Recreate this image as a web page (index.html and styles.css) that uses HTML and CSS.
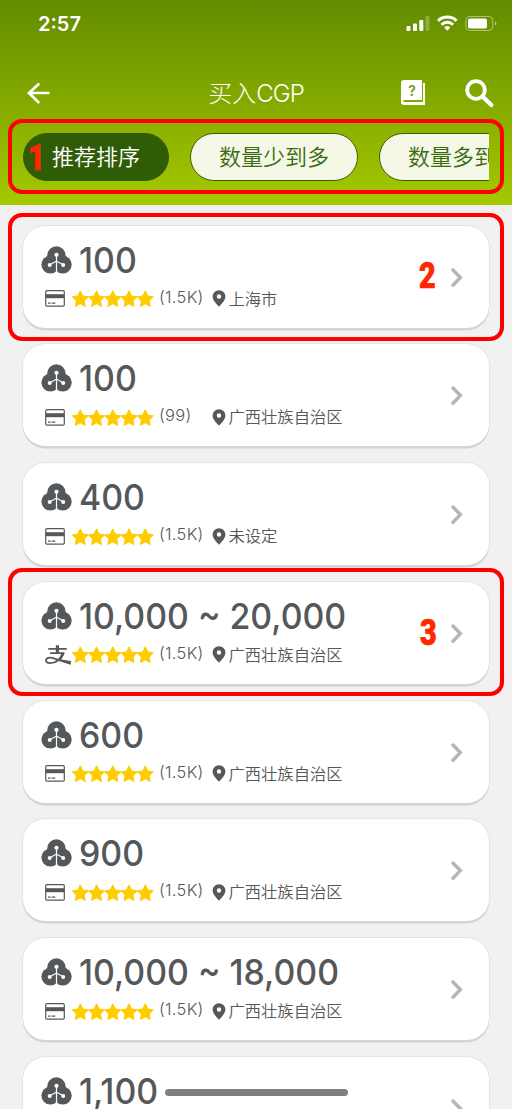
FILE: index.html
```html
<!DOCTYPE html>
<html lang="zh-CN">
<head>
<meta charset="utf-8">
<title>买入CGP</title>
<link rel="stylesheet" href="styles.css">
</head>
<body>
<svg class="defs" aria-hidden="true">
  <symbol id="coin" viewBox="0 0 31 28">
    <g fill="#55585b"><circle cx="15.4" cy="9.4" r="9.200"/><circle cx="9.400" cy="18.600" r="9"/><circle cx="21.700" cy="18.600" r="9"/><path d="M7.500 9.800h16l2 8-6 7h-8l-6-7z"/></g>
    <path d="M15.500 9v19M8.500 19l7-3.900 7 3.900" fill="none" stroke="#fff" stroke-width="1.200"/>
    <circle cx="15.500" cy="8.800" r="2.100" fill="#fff"/><circle cx="8.700" cy="18.900" r="2" fill="#fff"/><circle cx="22.200" cy="18.900" r="2" fill="#fff"/>
  </symbol>
  <symbol id="card" viewBox="0 0 20 17">
    <rect x=".7" y=".7" width="18.600" height="15.400" rx="1.200" fill="none" stroke="#55585b" stroke-width="1.200"/>
    <path d="M1 4.200h18v4H1z" fill="#55585b"/><path d="M3 13.200h2.600M6.700 13.200h3.600" stroke="#55585b" stroke-width="1.300"/>
  </symbol>
  <symbol id="alipay" viewBox="0 0 26 20">
    <path d="M3.300 3.800h18.400M5 8.100h13.200C16 14.200 10.600 18.200 5.200 18.200c-3 0-4.400-1.400-4.200-3 .3-2.200 3.200-3.100 6.200-2.400 5 1.200 10 4.200 18 5" fill="none" stroke="#55585b" stroke-width="1.800"/>
    <path d="M10.800.2h3.200v7.500h-3.200zM16.400 8h3.300c-.8 2.400-2 4.500-3.600 6.300l-2-1c1.100-1.700 1.800-3.400 2.300-5.300zM13.500 13.600c4 1.400 8 2 12.300 2.300v3.900c-4-.9-8.800-3-12.300-5.200z" fill="#55585b"/>
  </symbol>
  <symbol id="stars" viewBox="0 0 82 17">
    <g fill="#fc0" stroke="#fc0" stroke-width="1" stroke-linejoin="round">
      <path id="star" d="M8.300.8l2.500 5.200 5.500.8-4 4.100.9 5.600-4.900-2.700-4.900 2.700.9-5.600-4-4.100 5.500-.8z"/>
      <use href="#star" x="16.250"/><use href="#star" x="32.500"/><use href="#star" x="48.750"/><use href="#star" x="65"/>
    </g>
  </symbol>
  <symbol id="pin" viewBox="0 0 14 17">
    <path fill="#55585b" fill-rule="evenodd" d="M7 .2a6.400 6.400 0 0 0-6.400 6.400C.6 10.800 5 14.600 7 16.800c2-2.200 6.400-6 6.400-10.200A6.400 6.400 0 0 0 7 .2zm0 4.100a2.200 2.200 0 1 1 0 4.400 2.200 2.200 0 0 1 0-4.400z"/>
  </symbol>
  <symbol id="chevron" viewBox="0 0 12 20">
    <path d="M2 2l7.300 7.600L2 17.200" fill="none" stroke="#b6b6b6" stroke-width="3.500" stroke-linecap="round" stroke-linejoin="miter"/>
  </symbol>
</svg>
<div class="screen">
  <header class="top">
    <div class="status">
      <span class="time">2:57</span>
      <svg width="92" height="18" viewBox="0 0 92 18" fill="#fff">
        <rect x="1.500" y="12" width="4" height="5" rx="1"/><rect x="8" y="9.500" width="4" height="7.500" rx="1"/><rect x="14.300" y="6" width="4" height="11" rx="1"/><rect x="20.500" y="2" width="4" height="15" rx="1" opacity=".25"/>
        <g fill="none" stroke="#fff" stroke-width="3"><path d="M33.100 6.800a13.200 13.200 0 0 1 18.400 0"/><path d="M36.500 10.700a8.200 8.200 0 0 1 11.600 0"/></g><path d="M39.300 13.400a4.300 4.300 0 0 1 6 0l-3 3.400z"/>
        <rect x="60.800" y="2.500" width="27" height="14" rx="4" fill="none" stroke="#fff" opacity=".45"/><rect x="63" y="4.500" width="19" height="10" rx="2"/><path d="M89.800 7.500q1.600.5 1.600 2t-1.600 2z" opacity=".5"/>
      </svg>
    </div>
    <div class="nav">
      <svg class="back" width="24" height="24" viewBox="0 0 24 24"><path d="M12.200 2.500L2 12l10.200 10M2.300 12H22.500" fill="none" stroke="#fff" stroke-width="2.700"/></svg>
      <h1>买入<span>CGP</span></h1>
      <div class="tools">
        <div class="book"><svg width="25" height="26" viewBox="0 0 25 26" fill="#fff"><path d="M3 0h18v20H2.500v2H22V3h2v22H3q-3 0-3-3V3q0-3 3-3z"/></svg><span>?</span></div>
        <svg width="29" height="29" viewBox="0 0 29 29" fill="none" stroke="#fff"><circle cx="11" cy="11" r="8.800" stroke-width="3.800"/><path d="M17.500 17.500l8.800 8.500" stroke-width="4.200" stroke-linecap="round"/></svg>
      </div>
    </div>
    <div class="chips"><span class="chip active">推荐排序</span><span class="chip">数量少到多</span><span class="chip">数量多到少</span></div>
  </header>
  <main class="list">
    <article class="offer"><div class="info"><div class="amount"><svg><use href="#coin"/></svg><b>100</b></div><div class="meta"><svg class="pay"><use href="#card"/></svg><svg class="stars"><use href="#stars"/></svg><span class="count">(1.5K)</span><svg class="pin"><use href="#pin"/></svg><span class="place">上海市</span></div></div><svg class="go"><use href="#chevron"/></svg></article>
    <article class="offer"><div class="info"><div class="amount"><svg><use href="#coin"/></svg><b>100</b></div><div class="meta"><svg class="pay"><use href="#card"/></svg><svg class="stars"><use href="#stars"/></svg><span class="count">(99)</span><svg class="pin"><use href="#pin"/></svg><span class="place">广西壮族自治区</span></div></div><svg class="go"><use href="#chevron"/></svg></article>
    <article class="offer"><div class="info"><div class="amount"><svg><use href="#coin"/></svg><b>400</b></div><div class="meta"><svg class="pay"><use href="#card"/></svg><svg class="stars"><use href="#stars"/></svg><span class="count">(1.5K)</span><svg class="pin"><use href="#pin"/></svg><span class="place">未设定</span></div></div><svg class="go"><use href="#chevron"/></svg></article>
    <article class="offer"><div class="info"><div class="amount"><svg><use href="#coin"/></svg><b>10,000 ~ 20,000</b></div><div class="meta"><svg class="pay ali"><use href="#alipay"/></svg><svg class="stars"><use href="#stars"/></svg><span class="count">(1.5K)</span><svg class="pin"><use href="#pin"/></svg><span class="place">广西壮族自治区</span></div></div><svg class="go"><use href="#chevron"/></svg></article>
    <article class="offer"><div class="info"><div class="amount"><svg><use href="#coin"/></svg><b>600</b></div><div class="meta"><svg class="pay"><use href="#card"/></svg><svg class="stars"><use href="#stars"/></svg><span class="count">(1.5K)</span><svg class="pin"><use href="#pin"/></svg><span class="place">广西壮族自治区</span></div></div><svg class="go"><use href="#chevron"/></svg></article>
    <article class="offer"><div class="info"><div class="amount"><svg><use href="#coin"/></svg><b>900</b></div><div class="meta"><svg class="pay"><use href="#card"/></svg><svg class="stars"><use href="#stars"/></svg><span class="count">(1.5K)</span><svg class="pin"><use href="#pin"/></svg><span class="place">广西壮族自治区</span></div></div><svg class="go"><use href="#chevron"/></svg></article>
    <article class="offer"><div class="info"><div class="amount"><svg><use href="#coin"/></svg><b>10,000 ~ 18,000</b></div><div class="meta"><svg class="pay"><use href="#card"/></svg><svg class="stars"><use href="#stars"/></svg><span class="count">(1.5K)</span><svg class="pin"><use href="#pin"/></svg><span class="place">广西壮族自治区</span></div></div><svg class="go"><use href="#chevron"/></svg></article>
    <article class="offer"><div class="info"><div class="amount"><svg><use href="#coin"/></svg><b>1,100</b></div></div><svg class="go"><use href="#chevron"/></svg></article>
  </main>
  <div class="frame frame-sort"></div><div class="frame frame-second"></div><div class="frame frame-third"></div>
  <span class="mark mark-one">1</span><span class="mark mark-two">2</span><span class="mark mark-three">3</span>
  <div class="home"></div>
</div>
</body>
</html>
```
FILE: styles.css
```css
* { box-sizing: border-box; }
body { margin: 0; }
svg { display: block; flex: none; }
.defs { position: absolute; width: 0; height: 0; }
.screen { position: relative; width: 512px; height: 1109px; overflow: hidden; background: #f1f1f1; font-family: Inter, "Noto Sans CJK SC", sans-serif; color: #55585b; }
.top { height: 204.500px; padding-top: 14px; background: linear-gradient(#638b00, #a5c900); color: #fff; }
.status { height: 18px; display: flex; justify-content: space-between; padding: 0 15px 0 38px; }
.time { font-size: 20px; line-height: 20px; font-weight: 600; }
.nav { height: 50px; margin-top: 36px; display: grid; grid-template-columns: 1fr auto 1fr; align-items: center; padding: 0 18px 0 27px; }
h1 { margin: 2px 9px 0 0; font-size: 24px; line-height: 30px; font-weight: 300; white-space: nowrap; }
h1 span { letter-spacing: -.9px; }
.tools { display: flex; justify-content: flex-end; gap: 39px; align-items: center; }
.book { display: grid; }
.book > * { grid-area: 1 / 1; }
.book span { color: #759b00; font: 600 14px/22px Inter, sans-serif; text-align: center; padding-right: 3px; }
.chips { display: flex; gap: 21px; margin: 15px 23px 0; overflow: hidden; }
.chip { flex: none; height: 48px; padding: 0 28px; border: 1px solid #376200; border-radius: 24px; background: #f5f8e7; color: #376b0c; font-size: 22px; line-height: 47px; font-weight: 350; white-space: nowrap; }
.chip.active { background: #2f5d07; border-color: #2f5d07; color: #fff; }
.list { display: flex; flex-direction: column; gap: 16.800px; padding: 21px 23px 0; }
.offer { flex: none; height: 102px; border-radius: 22px; background: #fff; box-shadow: 0 2.500px 0 #d4d4d4, 0 0 0 .7px #dedede; display: flex; justify-content: space-between; padding: 0 26px 0 18px; }
.info { padding-top: 13px; }
.amount { display: flex; align-items: center; height: 42px; gap: 7px; }
.amount svg { width: 31px; height: 28px; }
.amount b { font-size: 36px; line-height: 42px; font-weight: 500; white-space: nowrap; transform: scaleX(.94); transform-origin: left; }
.meta { display: flex; align-items: center; height: 24px; margin-top: 6px; padding-left: 4px; }
.pay { width: 20px; height: 17px; margin-right: 7px; }
.pay.ali { width: 26px; height: 20px; margin-right: 1px; }
.stars { width: 82px; height: 17px; }
.count { flex: none; width: 57.500px; padding-left: 5px; font-size: 16.500px; line-height: 20px; font-weight: 300; letter-spacing: .3px; padding-bottom: 4px; white-space: nowrap; }
.pin { width: 14px; height: 17px; }
.place { margin-left: 3px; font-size: 16.300px; line-height: 24px; font-weight: 350; white-space: nowrap; }
.go { width: 12px; height: 20px; margin-top: 42px; }
.frame { position: absolute; left: 8px; width: 496px; border: 4px solid #f00; border-radius: 14px; }
.frame-sort { top: 119px; height: 75px; }
.frame-second { top: 213px; height: 128px; }
.frame-third { top: 568px; height: 128px; }
.mark { position: absolute; font: 900 36px/36px Roboto, sans-serif; color: #ff2600; -webkit-text-stroke: .7px #ff2600; transform: scaleX(.8); transform-origin: left; }
.mark-one { left: 28px; top: 140px; }
.mark-two { left: 419px; top: 258px; }
.mark-three { left: 420px; top: 615px; }
.home { position: absolute; left: 165px; top: 1089px; width: 183px; height: 7px; border-radius: 4px; background: #808080; }
```
